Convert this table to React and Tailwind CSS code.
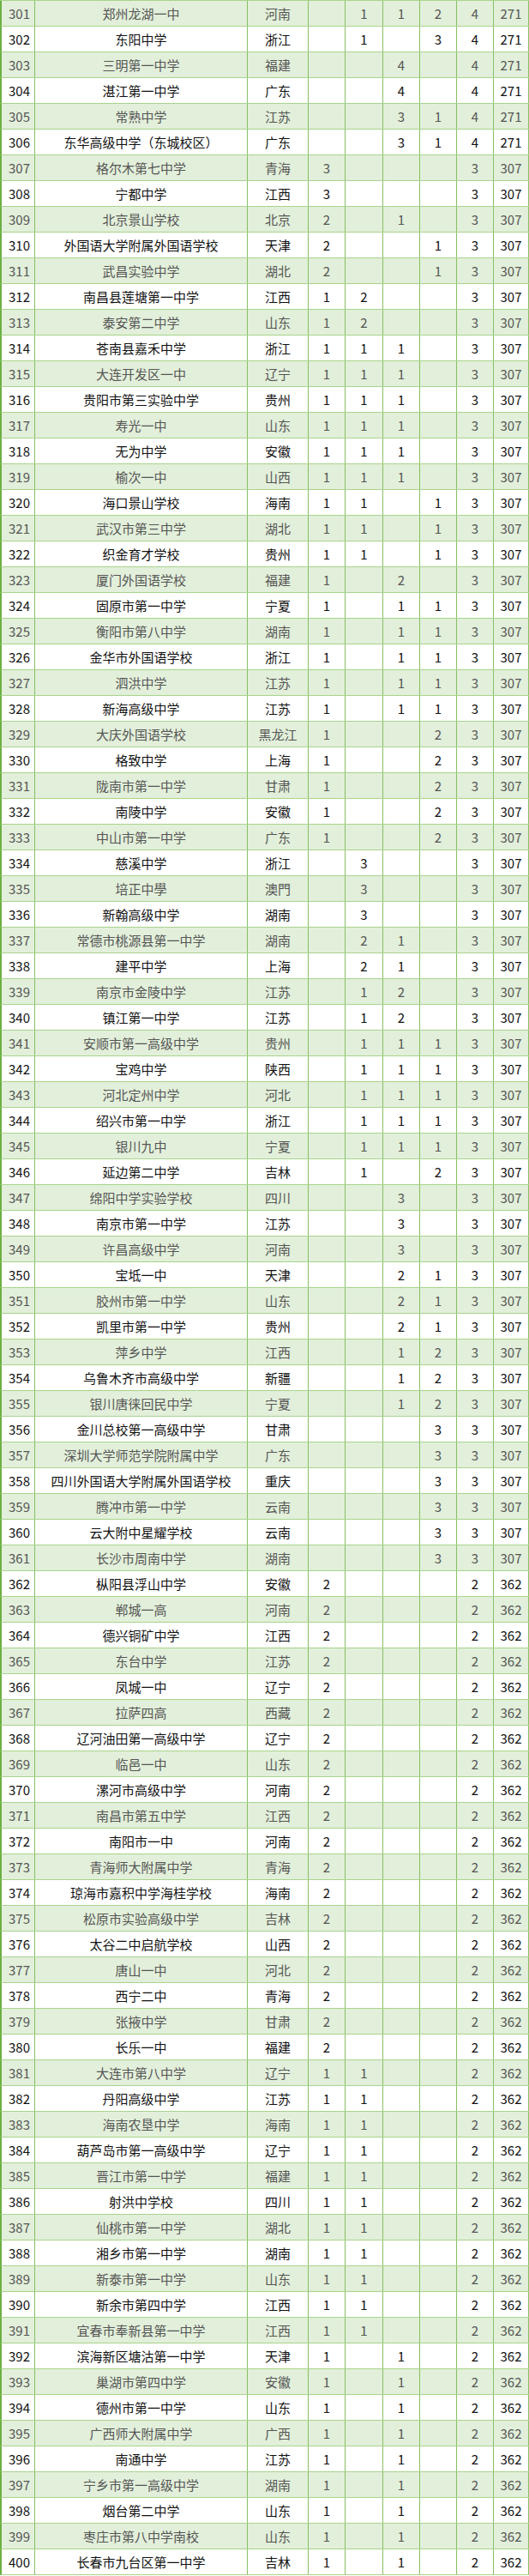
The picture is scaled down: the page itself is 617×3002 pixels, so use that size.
import React from "react";

const raw = `301|郑州龙湖一中|河南||1|1|2
302|东阳中学|浙江||1||3
303|三明第一中学|福建|||4|
304|湛江第一中学|广东|||4|
305|常熟中学|江苏|||3|1
306|东华高级中学（东城校区）|广东|||3|1
307|格尔木第七中学|青海|3|||
308|宁都中学|江西|3|||
309|北京景山学校|北京|2||1|
310|外国语大学附属外国语学校|天津|2|||1
311|武昌实验中学|湖北|2|||1
312|南昌县莲塘第一中学|江西|1|2||
313|泰安第二中学|山东|1|2||
314|苍南县嘉禾中学|浙江|1|1|1|
315|大连开发区一中|辽宁|1|1|1|
316|贵阳市第三实验中学|贵州|1|1|1|
317|寿光一中|山东|1|1|1|
318|无为中学|安徽|1|1|1|
319|榆次一中|山西|1|1|1|
320|海口景山学校|海南|1|1||1
321|武汉市第三中学|湖北|1|1||1
322|织金育才学校|贵州|1|1||1
323|厦门外国语学校|福建|1||2|
324|固原市第一中学|宁夏|1||1|1
325|衡阳市第八中学|湖南|1||1|1
326|金华市外国语学校|浙江|1||1|1
327|泗洪中学|江苏|1||1|1
328|新海高级中学|江苏|1||1|1
329|大庆外国语学校|黑龙江|1|||2
330|格致中学|上海|1|||2
331|陇南市第一中学|甘肃|1|||2
332|南陵中学|安徽|1|||2
333|中山市第一中学|广东|1|||2
334|慈溪中学|浙江||3||
335|培正中學|澳門||3||
336|新翰高级中学|湖南||3||
337|常德市桃源县第一中学|湖南||2|1|
338|建平中学|上海||2|1|
339|南京市金陵中学|江苏||1|2|
340|镇江第一中学|江苏||1|2|
341|安顺市第一高级中学|贵州||1|1|1
342|宝鸡中学|陕西||1|1|1
343|河北定州中学|河北||1|1|1
344|绍兴市第一中学|浙江||1|1|1
345|银川九中|宁夏||1|1|1
346|延边第二中学|吉林||1||2
347|绵阳中学实验学校|四川|||3|
348|南京市第一中学|江苏|||3|
349|许昌高级中学|河南|||3|
350|宝坻一中|天津|||2|1
351|胶州市第一中学|山东|||2|1
352|凯里市第一中学|贵州|||2|1
353|萍乡中学|江西|||1|2
354|乌鲁木齐市高级中学|新疆|||1|2
355|银川唐徕回民中学|宁夏|||1|2
356|金川总校第一高级中学|甘肃||||3
357|深圳大学师范学院附属中学|广东||||3
358|四川外国语大学附属外国语学校|重庆||||3
359|腾冲市第一中学|云南||||3
360|云大附中星耀学校|云南||||3
361|长沙市周南中学|湖南||||3
362|枞阳县浮山中学|安徽|2|||
363|郸城一高|河南|2|||
364|德兴铜矿中学|江西|2|||
365|东台中学|江苏|2|||
366|凤城一中|辽宁|2|||
367|拉萨四高|西藏|2|||
368|辽河油田第一高级中学|辽宁|2|||
369|临邑一中|山东|2|||
370|漯河市高级中学|河南|2|||
371|南昌市第五中学|江西|2|||
372|南阳市一中|河南|2|||
373|青海师大附属中学|青海|2|||
374|琼海市嘉积中学海桂学校|海南|2|||
375|松原市实验高级中学|吉林|2|||
376|太谷二中启航学校|山西|2|||
377|唐山一中|河北|2|||
378|西宁二中|青海|2|||
379|张掖中学|甘肃|2|||
380|长乐一中|福建|2|||
381|大连市第八中学|辽宁|1|1||
382|丹阳高级中学|江苏|1|1||
383|海南农垦中学|海南|1|1||
384|葫芦岛市第一高级中学|辽宁|1|1||
385|晋江市第一中学|福建|1|1||
386|射洪中学校|四川|1|1||
387|仙桃市第一中学|湖北|1|1||
388|湘乡市第一中学|湖南|1|1||
389|新泰市第一中学|山东|1|1||
390|新余市第四中学|江西|1|1||
391|宜春市奉新县第一中学|江西|1|1||
392|滨海新区塘沽第一中学|天津|1||1|
393|巢湖市第四中学|安徽|1||1|
394|德州市第一中学|山东|1||1|
395|广西师大附属中学|广西|1||1|
396|南通中学|江苏|1||1|
397|宁乡市第一高级中学|湖南|1||1|
398|烟台第二中学|山东|1||1|
399|枣庄市第八中学南校|山东|1||1|
400|长春市九台区第一中学|吉林|1||1|`;

const rows = raw.split("\n").map((line) => {
  const [rank, name, prov, a, b, c, d] = line.split("|");
  const r = parseInt(rank, 10);
  const total = r <= 306 ? "4" : r <= 361 ? "3" : "2";
  const pos = r <= 306 ? "271" : r <= 361 ? "307" : "362";
  return [rank, name, prov, a || "", b || "", c || "", d || "", total, pos];
});

const widths = [
  "w-[39px]",
  "w-[248px]",
  "w-[71px]",
  "w-[43px]",
  "w-[44px]",
  "w-[43px]",
  "w-[43px]",
  "w-[43px]",
  "w-[41px]",
];

export default function App() {
  return (
    <div
      className="w-[617px] bg-white border-t border-t-[#a8d48c]"
      style={{ fontFamily: '"Noto Sans CJK SC", "Noto Sans", sans-serif' }}
    >
      {rows.map((row, i) => {
        const odd = i % 2 === 0;
        return (
          <div
            key={row[0]}
            className={`flex h-[30px] border-l-2 border-l-[#6cb043] border-b border-b-[#a8d48c] ${
              odd ? "bg-[#e2efda] text-[#555555]" : "bg-white text-[#111111]"
            }`}
          >
            {row.map((cell, j) => (
              <div
                key={j}
                className={`${widths[j]} shrink-0 flex items-center justify-center border-r border-r-[#86c063] text-[15px] leading-none whitespace-nowrap ${
                  j === 0 ? "justify-start pl-[8px]" : ""
                }`}
              >
                {cell}
              </div>
            ))}
          </div>
        );
      })}
    </div>
  );
}
